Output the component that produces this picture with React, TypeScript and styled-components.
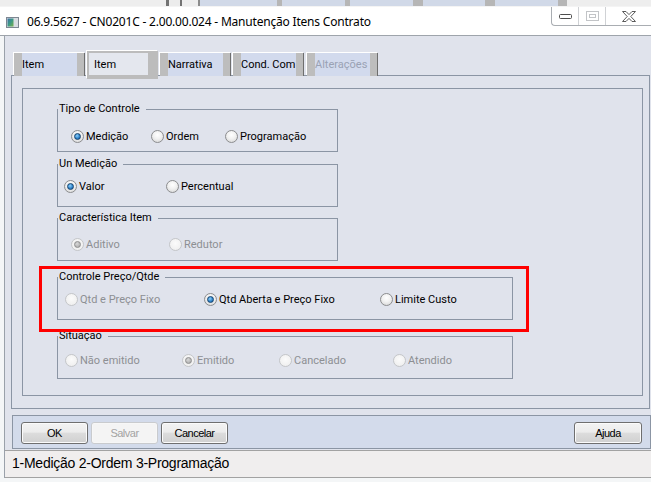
import React from "react";
import styled, { createGlobalStyle } from "styled-components";

const GlobalStyle = createGlobalStyle`
  html, body {
    margin: 0;
    padding: 0;
    overflow: hidden;
    background: #f4f6f7;
  }
`;

const Screen = styled.div`
  width: 651px;
  height: 482px;
  overflow: hidden;
  display: flex;
  flex-direction: column;
  background: #f4f6f7;
  font-family: Roboto, "Liberation Sans", sans-serif;
  font-size: 11px;
  color: #000;
`;

const BackStrip = styled.div`
  height: 7px;
  display: flex;
  background: #f4f4f4;
  flex: none;
`;

const BackSeg = styled.div<{ $w: number; $c: string }>`
  width: ${(p) => p.$w}px;
  height: 6px;
  background: ${(p) => p.$c};
  flex: none;
`;

const TitleBar = styled.div`
  height: 28px;
  flex: none;
  display: flex;
  align-items: center;
  background: #fff;
  border-bottom: 1px solid #9ea4ab;
`;

const TitleIcon = styled.svg`
  margin-left: 6px;
  margin-top: 2px;
  flex: none;
`;

const TitleText = styled.div`
  margin-left: 8px;
  font-family: "Noto Sans", sans-serif;
  font-size: 12px;
  letter-spacing: -0.2px;
  color: #000;
  white-space: nowrap;
`;

const Controls = styled.div`
  margin-left: auto;
  align-self: flex-start;
  display: flex;
  height: 18px;
  border-left: 1px solid #a9adb2;
  border-bottom: 1px solid #a9adb2;
  border-bottom-left-radius: 4px;
`;

const CtrlButton = styled.div<{ $w: number; $sep?: boolean }>`
  width: ${(p) => p.$w}px;
  display: flex;
  align-items: center;
  justify-content: center;
  border-right: ${(p) => (p.$sep ? "1px solid #d0d2d5" : "none")};
`;

const Frame = styled.div`
  flex: 1;
  display: flex;
  flex-direction: column;
  padding: 0 0 4px 4px;
`;

const Content = styled.div`
  flex: 1;
  display: flex;
  flex-direction: column;
  background: #e0e3ec;
  border-left: 1px solid #9aa1aa;
`;

const TabRow = styled.div`
  height: 39px;
  box-sizing: border-box;
  display: flex;
  align-items: flex-end;
  padding-left: 9px;
`;

const Tab = styled.div<{ $disabled?: boolean; $gap?: number }>`
  position: relative;
  z-index: 1;
  width: 71px;
  height: 23px;
  margin: 0 0 -1px ${(p) => p.$gap ?? 1}px;
  box-sizing: border-box;
  padding-left: 8px;
  display: flex;
  align-items: center;
  background: linear-gradient(
    to right,
    #bdbdbd 0 8px,
    #d2daed 8px calc(100% - 8px),
    #bdbdbd calc(100% - 8px) calc(100% - 1px),
    #6e6e6e calc(100% - 1px)
  );
  box-shadow: -1px -1px 0 #fff;
  color: ${(p) => (p.$disabled ? "#9aa2b4" : "#000")};
  white-space: nowrap;
`;

const ActiveTab = styled.div`
  position: relative;
  z-index: 1;
  width: 71px;
  height: 28px;
  margin: 0 0 -4px 2px;
  box-sizing: border-box;
  border-style: solid;
  border-color: #bcbcbc;
  border-width: 2px 10px 4px 2px;
  padding-left: 5px;
  display: flex;
  align-items: center;
  background: #e4e7ee;
  box-shadow: -1px -1px 0 #fff;
`;

const Panel = styled.div`
  margin-left: 6px;
  width: 639px;
  height: 334px;
  box-sizing: border-box;
  border: 1px solid #8b95a4;
  padding: 12px 6px 12px 10px;
  display: flex;
`;

const InnerBox = styled.div`
  flex: 1;
  border: 1px solid #8b95a4;
  display: flex;
  flex-direction: column;
  align-items: flex-start;
  padding-left: 34px;
`;

const Group = styled.fieldset<{ $w: number; $top?: number }>`
  width: ${(p) => p.$w}px;
  box-sizing: border-box;
  min-width: 0;
  margin: ${(p) => p.$top ?? 0}px 0 0 0;
  padding: 0;
  border: 1px solid #8b95a4;
`;

const Legend = styled.legend`
  margin: 0;
  padding: 0 6px 0 1px;
  line-height: 14px;
  font-size: 11px;
  color: #000;
`;

const Row = styled.div<{ $pt: number; $pl: number }>`
  height: 35px;
  box-sizing: border-box;
  padding: ${(p) => p.$pt}px 0 0 ${(p) => p.$pl}px;
  display: flex;
  align-items: flex-start;
`;

const Option = styled.div<{ $w?: number; $disabled?: boolean }>`
  ${(p) => (p.$w ? `width: ${p.$w}px;` : "")}
  flex: none;
  height: 14px;
  display: flex;
  align-items: center;
  gap: 2px;
  color: ${(p) => (p.$disabled ? "#8d8f93" : "#000")};
  white-space: nowrap;
`;

const Dot = styled.span<{ $checked?: boolean; $disabled?: boolean }>`
  width: 13px;
  height: 13px;
  box-sizing: border-box;
  border-radius: 50%;
  flex: none;
  display: grid;
  place-items: center;
  border: 1px solid ${(p) => (p.$disabled ? "#c4c6c9" : "#8c8d8f")};
  background: ${(p) =>
    p.$disabled
      ? "radial-gradient(circle at 50% 40%, #fbfbfb, #ececec)"
      : "radial-gradient(circle at 50% 35%, #ffffff 0%, #f1f1f1 45%, #d2d2d2 100%)"};
  &::after {
    content: "";
    display: ${(p) => (p.$checked ? "block" : "none")};
    width: 7px;
    height: 7px;
    box-sizing: border-box;
    border-radius: 50%;
    border: 1px solid ${(p) => (p.$disabled ? "#8e8e8e" : "#15426e")};
    background: ${(p) =>
      p.$disabled
        ? "radial-gradient(circle at 40% 35%, #d8d8d8, #a4a4a4)"
        : "radial-gradient(circle at 40% 35%, #8fd0fa, #2a80c8 60%, #1b5c98)"};
  }
`;

const Highlight = styled.div<{ $top: number }>`
  position: relative;
  margin-top: ${(p) => p.$top}px;
  &::after {
    content: "";
    position: absolute;
    top: -4px;
    left: -18px;
    right: -16px;
    bottom: -12px;
    border: 3px solid #ff0000;
    pointer-events: none;
  }
`;

const ButtonBar = styled.div`
  margin: 6px 0 1px 7px;
  width: 639px;
  height: 34px;
  box-sizing: border-box;
  border: 1px solid #8b95a4;
  background: #d3dbeb;
  padding: 6px 8px 0 8px;
  display: flex;
  align-items: flex-start;
  gap: 3px;
`;

const Button = styled.button<{ $w?: number; $dim?: boolean; $push?: boolean }>`
  width: ${(p) => p.$w ?? 67}px;
  height: 22px;
  box-sizing: border-box;
  margin-left: ${(p) => (p.$push ? "auto" : "0")};
  padding: 0;
  border-radius: 3px;
  border: 1px solid ${(p) => (p.$dim ? "#c9cbce" : "#6f6f6f")};
  background: ${(p) =>
    p.$dim
      ? "#f4f4f4"
      : "linear-gradient(#f3f3f3, #ececec 45%, #dcdcdc 52%, #d0d0d0)"};
  box-shadow: inset 0 0 0 1px ${(p) => (p.$dim ? "#f7f7f7" : "#fbfbfb")};
  font-family: "Liberation Sans", Arial, sans-serif;
  font-size: 11px;
  letter-spacing: -0.5px;
  color: ${(p) => (p.$dim ? "#a3a3a3" : "#000")};
`;

const StatusBar = styled.div`
  height: 28px;
  box-sizing: border-box;
  border-top: 1px solid #a2a2a2;
  border-bottom: 1px solid #a2a2a2;
  background: #f0eeee;
  padding-left: 7px;
  font-family: "Liberation Sans", Arial, sans-serif;
  font-size: 14px;
  letter-spacing: -0.25px;
  line-height: 25px;
  color: #000;
  white-space: nowrap;
`;

const backSegs: [number, string][] = [
  [166, "#eeeeee"], [3, "#737373"], [11, "#ececec"], [2, "#737373"],
  [16, "#eeeeee"], [2, "#8c8c8c"], [77, "#d1d9e8"], [5, "#b6b6b6"],
  [63, "#d1d9e8"], [5, "#b6b6b6"], [63, "#d1d9e8"], [10, "#b6b6b6"],
  [62, "#d1d9e8"], [10, "#b6b6b6"], [63, "#d1d9e8"], [9, "#b6b6b6"],
  [84, "#eeeeee"],
];

type Opt = { label: string; w?: number; checked?: boolean; disabled?: boolean };

const Radios = ({ opts }: { opts: Opt[] }) => (
  <>
    {opts.map((o) => (
      <Option key={o.label} $w={o.w} $disabled={o.disabled}>
        <Dot $checked={o.checked} $disabled={o.disabled} />
        {o.label}
      </Option>
    ))}
  </>
);

export default function App() {
  return (
    <Screen>
      <GlobalStyle />
      <BackStrip>
        {backSegs.map(([w, c], i) => (
          <BackSeg key={i} $w={w} $c={c} />
        ))}
      </BackStrip>

      <TitleBar>
        <TitleIcon width="13" height="11" viewBox="0 0 13 11">
          <defs>
            <linearGradient id="ic" x1="0" y1="0" x2="1" y2="1">
              <stop offset="0" stopColor="#3f6fa8" />
              <stop offset="0.5" stopColor="#3c9a86" />
              <stop offset="1" stopColor="#7cb04a" />
            </linearGradient>
          </defs>
          <rect x="0.5" y="0.5" width="12" height="10" fill="#d9dde2" stroke="#7d8691" />
          <rect x="1.5" y="1.5" width="6" height="8" fill="url(#ic)" />
        </TitleIcon>
        <TitleText>06.9.5627 - CN0201C - 2.00.00.024 - Manutenção Itens Contrato</TitleText>
        <Controls>
          <CtrlButton $w={26} $sep>
            <svg width="13" height="5" viewBox="0 0 13 5">
              <rect x="0.5" y="0.5" width="12" height="4" rx="1" fill="#fff" stroke="#4d4d4d" />
            </svg>
          </CtrlButton>
          <CtrlButton $w={26} $sep>
            <svg width="13" height="10" viewBox="0 0 13 10">
              <rect x="0.5" y="0.5" width="12" height="9" fill="#fff" stroke="#c2c4c7" />
              <rect x="3.5" y="3.5" width="6" height="3" fill="none" stroke="#c2c4c7" />
            </svg>
          </CtrlButton>
          <CtrlButton $w={45}>
            <svg width="14" height="11" viewBox="0 0 14 11">
              <path
                d="M0.5 0.5H4L7 3.6L10 0.5H13.5L8.8 5.5L13.5 10.5H10L7 7.4L4 10.5H0.5L5.2 5.5Z"
                fill="#fff"
                stroke="#5b5b5b"
                strokeLinejoin="round"
              />
            </svg>
          </CtrlButton>
        </Controls>
      </TitleBar>

      <Frame>
        <Content>
          <TabRow>
            <Tab $gap={0}>Item</Tab>
            <ActiveTab>Item</ActiveTab>
            <Tab $gap={2}>Narrativa</Tab>
            <Tab $gap={2}>Cond. Com</Tab>
            <Tab $gap={3} $disabled>Alterações</Tab>
          </TabRow>

          <Panel>
            <InnerBox>
              <Group $w={281} $top={13}>
                <Legend>Tipo de Controle</Legend>
                <Row $pt={13} $pl={13}>
                  <Radios
                    opts={[
                      { label: "Medição", w: 80, checked: true },
                      { label: "Ordem", w: 74 },
                      { label: "Programação" },
                    ]}
                  />
                </Row>
              </Group>

              <Group $w={281} $top={5}>
                <Legend>Un Medição</Legend>
                <Row $pt={8} $pl={6}>
                  <Radios
                    opts={[
                      { label: "Valor", w: 102, checked: true },
                      { label: "Percentual" },
                    ]}
                  />
                </Row>
              </Group>

              <Group $w={281} $top={4}>
                <Legend>Característica Item</Legend>
                <Row $pt={12} $pl={13}>
                  <Radios
                    opts={[
                      { label: "Aditivo", w: 98, checked: true, disabled: true },
                      { label: "Redutor", disabled: true },
                    ]}
                  />
                </Row>
              </Group>

              <Highlight $top={9}>
                <Group $w={456}>
                  <Legend>Controle Preço/Qtde</Legend>
                  <Row $pt={8} $pl={7}>
                    <Radios
                      opts={[
                        { label: "Qtd e Preço Fixo", w: 139, disabled: true },
                        { label: "Qtd Aberta e Preço Fixo", w: 176, checked: true },
                        { label: "Limite Custo" },
                      ]}
                    />
                  </Row>
                </Group>
              </Highlight>

              <Group $w={456} $top={9}>
                <Legend>Situação</Legend>
                <Row $pt={10} $pl={7}>
                  <Radios
                    opts={[
                      { label: "Não emitido", w: 117, disabled: true },
                      { label: "Emitido", w: 97, checked: true, disabled: true },
                      { label: "Cancelado", w: 114, disabled: true },
                      { label: "Atendido", disabled: true },
                    ]}
                  />
                </Row>
              </Group>
            </InnerBox>
          </Panel>

          <ButtonBar>
            <Button>OK</Button>
            <Button $dim disabled>Salvar</Button>
            <Button>Cancelar</Button>
            <Button $w={68} $push>Ajuda</Button>
          </ButtonBar>

          <StatusBar>1-Medição 2-Ordem 3-Programação</StatusBar>
        </Content>
      </Frame>
    </Screen>
  );
}
